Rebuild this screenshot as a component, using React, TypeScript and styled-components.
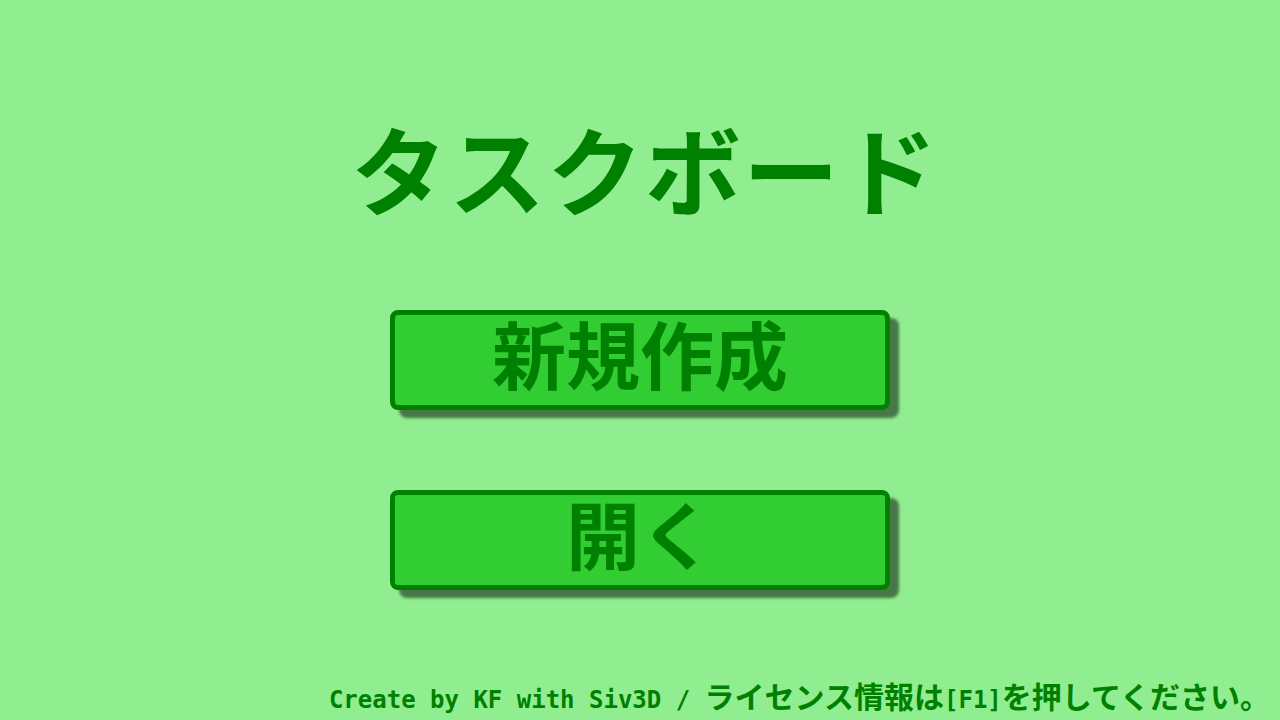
import styled, { createGlobalStyle } from "styled-components";

const GlobalStyle = createGlobalStyle`
    html, body {
        margin: 0;
        padding: 0;
        background: #90ee90;
    }
    body {
        font-family: "Noto Sans CJK JP", sans-serif;
    }
`;

const Page = styled.div`
    width: 1280px;
    height: 720px;
    background: #90ee90;
    display: flex;
    flex-direction: column;
    align-items: center;
    overflow: hidden;
`;

const Title = styled.h1`
    margin: 109px 0 0 10px;
    font-family: "Noto Sans CJK JP", sans-serif;
    font-size: 96px;
    font-weight: 700;
    line-height: 116px;
    color: #008000;
    letter-spacing: 2px;
`;

const Menu = styled.div`
    display: flex;
    flex-direction: column;
    gap: 80px;
    margin-top: 85px;
`;

const MenuButton = styled.button`
    box-sizing: border-box;
    width: 500px;
    height: 100px;
    border: 5px solid #008000;
    border-radius: 8px;
    background: #32cd32;
    box-shadow: 9px 8px 3px rgba(0, 0, 0, 0.5);
    color: #008000;
    font-family: "Noto Sans CJK JP", sans-serif;
    font-size: 74px;
    font-weight: 700;
    line-height: 1;
    display: flex;
    align-items: center;
    justify-content: center;
    padding: 0 0 16px;
    cursor: pointer;
`;

const Footer = styled.div`
    margin-top: auto;
    align-self: flex-end;
    padding: 0 10px 2px 0;
    color: #008000;
    font-family: "Noto Sans CJK JP", sans-serif;
    font-size: 30px;
    font-weight: 700;
    line-height: 36px;
    white-space: nowrap;
`;

const Latin = styled.span`
    font-family: "DejaVu Sans Mono", monospace;
    font-size: 24px;
    font-weight: 700;
`;

export default function App() {
    return (
        <>
            <GlobalStyle />
            <Page>
                <Title>タスクボード</Title>
                <Menu>
                    <MenuButton>新規作成</MenuButton>
                    <MenuButton>開く</MenuButton>
                </Menu>
                <Footer>
                    <Latin>Create by KF with Siv3D / </Latin>
                    ライセンス情報は<Latin>[F1]</Latin>を押してください。
                </Footer>
            </Page>
        </>
    );
}
